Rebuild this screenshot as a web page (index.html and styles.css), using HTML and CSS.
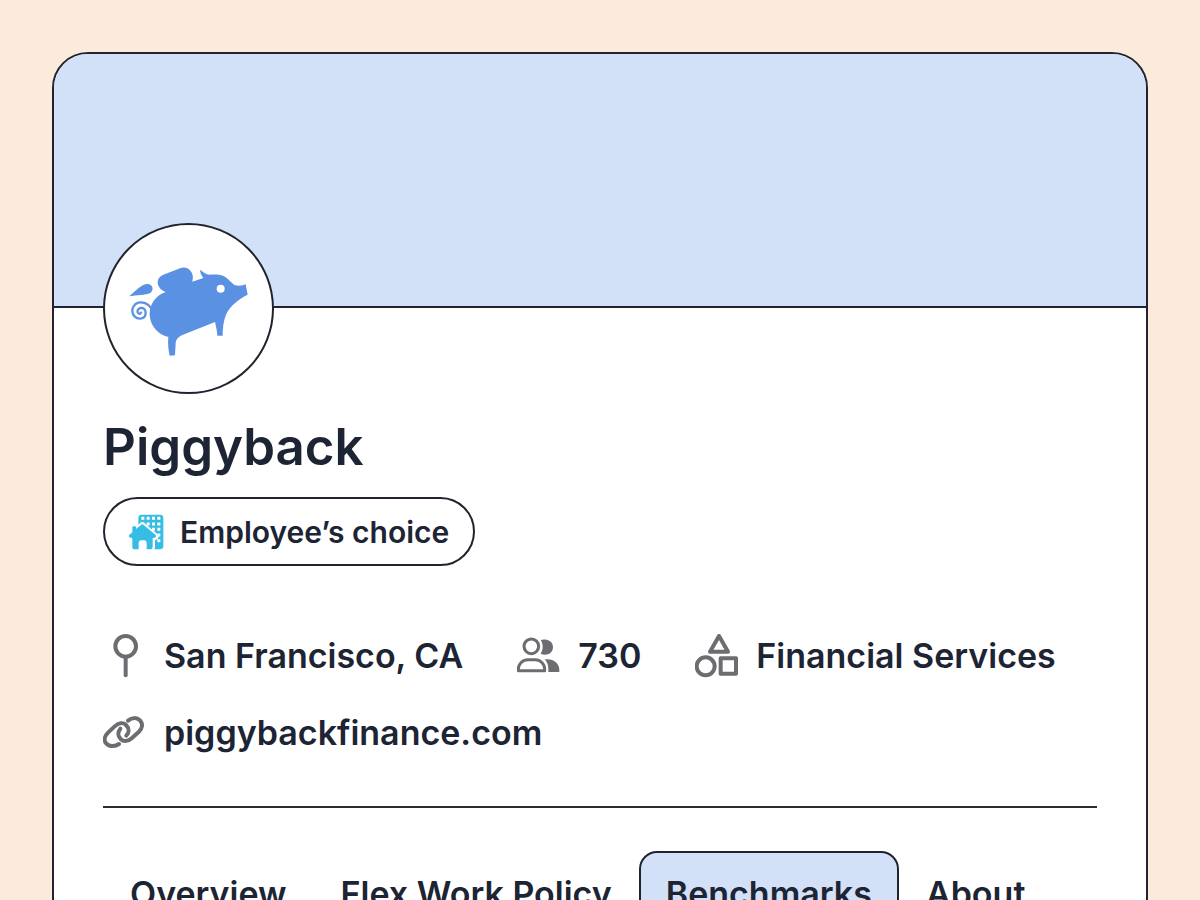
FILE: index.html
```html
<!DOCTYPE html>
<html lang="en">
<head>
<meta charset="utf-8">
<meta name="viewport" content="width=device-width, initial-scale=1">
<title>Piggyback</title>
<link rel="stylesheet" href="styles.css">
</head>
<body>
<main class="card">
  <div class="banner"></div>
  <div class="content">
    <div class="avatar">
      <svg class="logo" viewBox="103 133 360 300" role="img" aria-label="Piggyback logo">
        <path class="logo-fill" d="M104 245C125 225 145 206 160 208C175 210 178 226 168 234C152 243 125 240 104 245Z"/>
        <path class="logo-fill" d="M213 232C198 228 188 212 189 202C190 190 196 185 206 180L258 160C275 154 291 166 294 182C295 190 294 196 293 201L326 190C320 182 315 172 317 165C325 172 333 179 345 180C362 179 380 179 392 187C403 194 409 204 419 211C430 214 443 214 453 209L459 240C430 254 405 275 394 300C386 320 384 340 384 363L368 363C367 348 364 335 361 322L265 360C250 366 244 375 243 385C242 398 242 410 241 422L225 423C221 405 219 385 221 366C195 362 165 335 165 297C165 270 182 242 213 232Z"/>
        <circle class="logo-eye" cx="378" cy="222" r="12"/>
        <path class="logo-tail" d="M169 280C160 265 143 261 131 264C118 268 112 280 113 290C114 303 124 312 135 312C147 311 153 303 153 294C153 284 145 279 138 280C131 281 127 287 129 293C131 298 137 299 139 294"/>
      </svg>
    </div>
    <h1 class="name">Piggyback</h1>
    <div class="badge">
      <svg class="badge-icon" viewBox="97 310 108 108" aria-hidden="true">
        <rect class="cyan" x="128" y="312" width="75" height="104" rx="10"/>
        <path class="windows" d="M137 323H198M137 340H198M137 356H198M137 373H198M137 390H198"/>
        <path class="roof-gap" d="M140 341L99 377Q99 381 110 382V408Q110 415 118 415H162Q171 415 171 408V382Q182 382 182 377Z"/>
        <path class="cyan" d="M137 342Q140 340 143 342L181 374Q184 381 171 382V408Q171 416 163 416H153V397Q153 389 145 389H137Q129 389 129 397V416H118Q110 416 110 408V382Q97 381 100 374L110 365V350Q110 347 113 347H118Q121 347 121 350V355Z"/>
      </svg>
      <span>Employee’s choice</span>
    </div>
    <ul class="facts">
      <li class="fact">
        <svg class="icon" viewBox="24 42 132 132" aria-hidden="true"><circle cx="92" cy="79" r="31"/><path d="M92 110V166"/></svg>
        <span>San Francisco, CA</span>
      </li>
      <li class="fact">
        <svg class="icon" viewBox="51 42 132 132" aria-hidden="true">
          <circle class="thin" cx="94" cy="79" r="22"/>
          <path class="thin" d="M55 152V147C55 132 68 119 84 119H105C121 119 134 132 134 147V152Z"/>
          <path class="solid" d="M122 60C135 55 159 60 159 81C159 103 136 108 122 101C130 89 130 72 122 60Z"/>
          <path class="solid" d="M134 118H143C162 118 178 132 178 149V156H145V146C145 135 141 126 134 118Z"/>
        </svg>
        <span>730</span>
      </li>
      <li class="fact">
        <svg class="icon" viewBox="583 42 132 132" aria-hidden="true"><path d="M655 48L682 95H628Z"/><circle cx="615" cy="139" r="27"/><rect x="660" y="115" width="46" height="46"/></svg>
        <span>Financial Services</span>
      </li>
      <li class="fact">
        <svg class="icon" viewBox="24 273 132 132" aria-hidden="true">
          <path d="M72 372C62 379 44 382 34 371C25 361 29 348 39 338L59 319C70 309 84 306 93 315C103 325 103 338 94 347"/>
          <path d="M99 302C110 293 125 291 135 301C145 312 142 325 131 336L111 354C101 363 87 367 77 357C68 348 68 336 76 326"/>
        </svg>
        <a class="link" href="#">piggybackfinance.com</a>
      </li>
    </ul>
    <nav class="tabs" aria-label="Company sections">
      <a class="tab" href="#">Overview</a>
      <a class="tab" href="#">Flex Work Policy</a>
      <a class="tab active" href="#" aria-current="page">Benchmarks</a>
      <a class="tab" href="#">About</a>
    </nav>
  </div>
</main>
</body>
</html>
```
FILE: styles.css
```css
* { box-sizing: border-box; }

body {
  margin: 0;
  height: 100vh;
  overflow: hidden;
  padding: 52px;
  background: #fcebdd;
  color: #1d2433;
  font-family: Inter, "Liberation Sans", sans-serif;
  font-weight: 600;
}

.card {
  background: #fff;
  border: 2px solid #20242e;
  border-radius: 36px;
  overflow: hidden;
}

.banner {
  height: 254px;
  background: #d3e1f8;
  border-bottom: 2px solid #20242e;
}

.content { padding: 0 49px 80px; }

.avatar {
  position: relative;
  display: flex;
  align-items: center;
  justify-content: center;
  width: 171px;
  height: 171px;
  margin-top: -85px;
  background: #fff;
  border: 2px solid #20242e;
  border-radius: 50%;
}

.logo { width: 120px; height: 100px; }
.logo-fill { fill: #5a91e3; }
.logo-eye { fill: #fff; }
.logo-tail { fill: none; stroke: #5a91e3; stroke-width: 7; stroke-linecap: round; }

.name {
  margin: 21px 0 0;
  font-size: 51px;
  line-height: 64px;
  font-weight: 600;
}

.badge {
  display: inline-flex;
  align-items: center;
  gap: 16px;
  height: 69px;
  margin-top: 18px;
  padding: 0 24px 0 23px;
  border: 2px solid #20242e;
  border-radius: 35px;
  font-size: 30px;
}

.badge-icon { width: 36px; height: 36px; }
.cyan { fill: #35bde4; }
.windows { stroke: #fff; stroke-width: 9; stroke-dasharray: 9 7; }
.roof-gap { fill: #fff; stroke: #fff; stroke-width: 14; stroke-linejoin: round; }

.facts {
  display: flex;
  flex-wrap: wrap;
  gap: 33px 54px;
  margin: 68px 0 0;
  padding: 0 0 51px;
  border-bottom: 2px solid #2b2d33;
  list-style: none;
  font-size: 34px;
  line-height: 44px;
}

.fact { display: flex; align-items: center; gap: 17px; }

.icon {
  width: 44px;
  height: 44px;
  fill: none;
  stroke: #6b6d70;
  stroke-width: 12;
  stroke-linecap: round;
  stroke-linejoin: round;
}

.thin { stroke-width: 9; }
.solid { fill: #6b6d70; stroke: none; }

.link { color: inherit; text-decoration: none; }

.tabs { display: flex; margin-top: 43px; }

.tab {
  padding: 20px 25px;
  border: 2px solid transparent;
  border-radius: 18px;
  color: inherit;
  font-size: 34px;
  line-height: 42px;
  text-decoration: none;
  white-space: nowrap;
}

.tab.active { background: #d3e1f8; border-color: #20242e; }
```
